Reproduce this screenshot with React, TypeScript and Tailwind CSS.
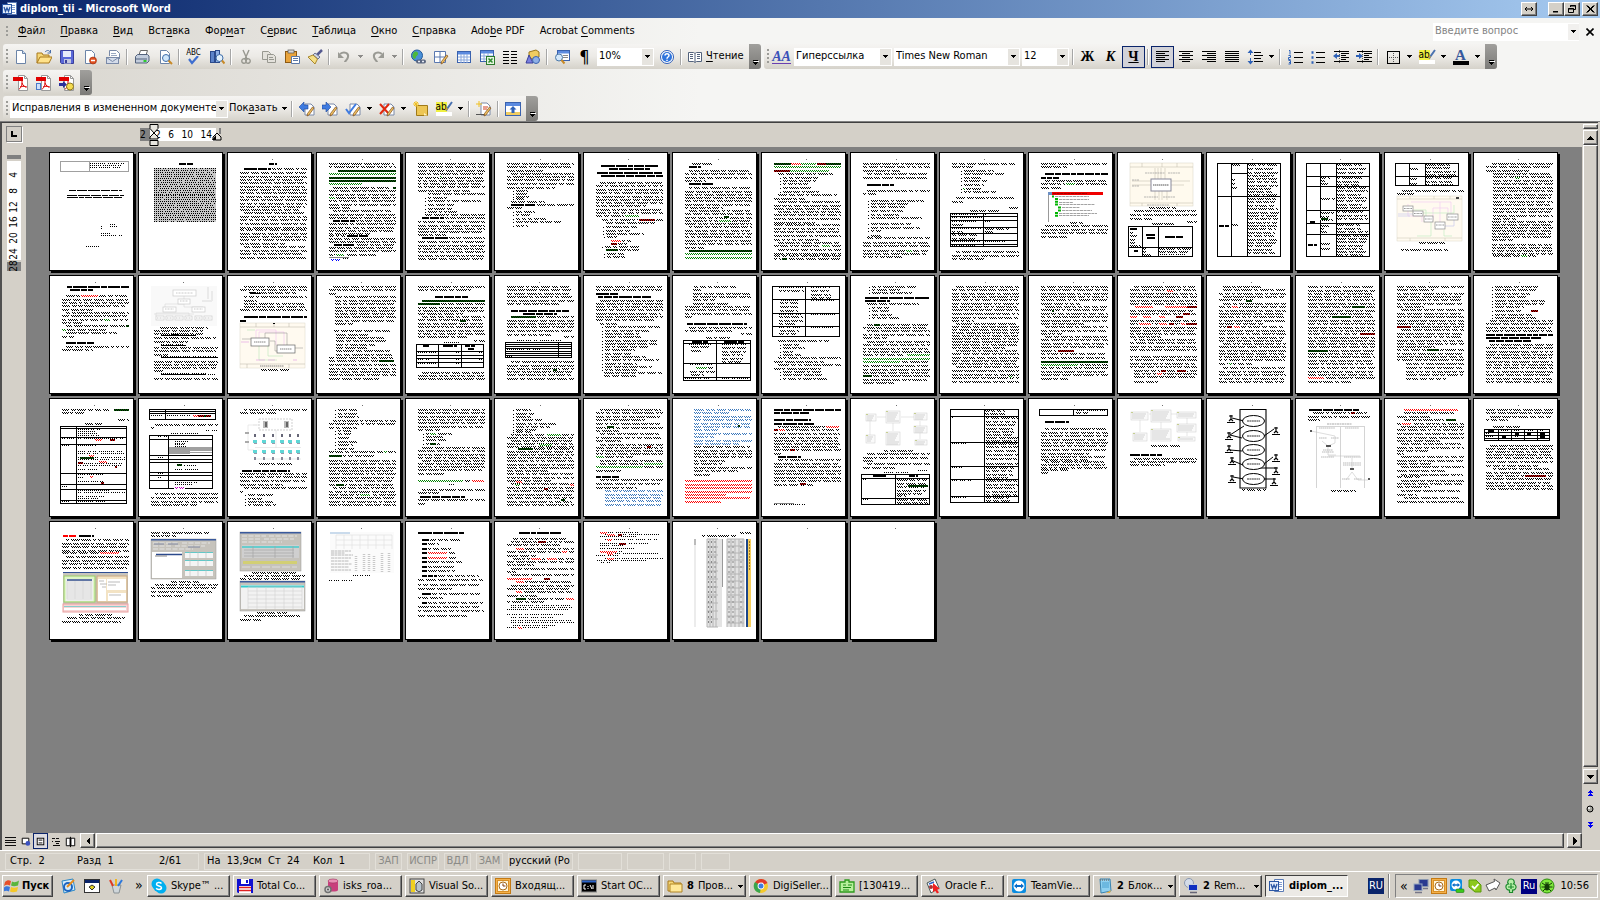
import type { ReactNode } from 'react'
import clsx from 'clsx'

/* ---------- page thumbnails ---------- */

// Each token is a run of lines: kind, first y, last y, @from:to, flags (i = indent first line, s = short last line)
// T text, L bullet list, D dotted text, H heading, I thin heading, G/R/B coloured text, g/r marked text,
// h red heading, u underlined, S selection, X table (x,y,w,h;cols;rows), F figure
const PAGES: string[] = [
  'Q11,9,68,10;40; D11-15@41:79 I38@20:73 I43@18:75 I45@18:73 D72-76@52:58 D72-74@61:68 D81@52:61 D83@52:73 D94@37:50',
  'H11@41:55 S16-69@16:78',
  'H11@42:50 H16@17:44 T16@45:80 T20-27 T30-37 T40-44 T47-54 T57@13:72 T60-64i T67-75 T77-84 T87-91s T94-105i',
  'T11-14 g18@22:80 G21@13:80 g25@13:80 g28@13:80 G31@13:46 T35@17:75 g35@77:80 T38-45 G45@13:19 T48-55s T58-62i T65s H68@17:39 T68@40:80 T71-75 T78-81s H83@31:54 T83@13:29 T86-89 H92@18:39 T92@41:80 T95-98 T102@13:60 G102@20:28 l105@13:33 b107@15:24 D106@27:33',
  'T11-14 T18-31 G24@35:37 T34-38s T41@23:80 L45@20:52 L48@20:80 L52-59@20:56 T62@20:80 H65@17:39 T65@40:80 T69-76 T79-82s H85@17:43 T85@44:80 T89-93 T96-106',
  'T11-14 T18@13:49 T21-24i T27-35s L38-41@19:42 L44-46@19:37 T49@17:51 H52@17:41 T52@43:80 T55@13:28 L59-62@19:43 L66-69@19:74 L73@19:36',
  'H13@18:75 H16@26:67 H20@14:79 H23@18:80 T30@17:80 T33-37 T40-44 T47-53s T57-63s G63@42:56 T67@19:56 r67@56:72 T67@72:80 T70@23:72 L74-81@20:62 L84@21:40 R88@28:38 T88@39:48 r91@28:34 T91@35:44 L94@19:58 g97@23:35 T97@36:56 L101-104@21:45',
  'T11@20:40 H14@17:29 T18-21i T25-28s H31@17:42 T35-42i T45-55s T58-71i g64@52:57 G68@47:59 T74-81i T84-91 T95@13:32 g98@17:80 G101-105@13:80',
  'g11@13:30 R11@30:40 G11@40:55 r11@56:65 g11@65:80 G14@13:80 r18@13:29 G18@29:68 T21@17:73 L25-28@19:65 L31-35@19:60 L39@19:66 T42-46is T49-56i T59-62i T66-70s T72-76 T79-87s T90-93i G93@61:69 T97-101i T103-106 g106@21:26',
  'T11-14 T18@13:50 T21-25i H32@17:44 T38@17:80 T41@13:26 L48-51@18:75 L54-62@18:62 L65@18:72 L71-75@18:75 L78-83@18:35 T85-90i T93-98 G98@56:62 T101-104s',
  'T11-14s L18-21@22:72 L25-28@22:56 L32-36@22:46 G36@24:26 L39@22:68 T45@17:77 T49@13:24 T55@70:79 T58@31:60 X11,61,67,33;44;64,68,75,81,88,92 D62@13:38 D65@13:43 D69@13:38 T72@13:26 D76@13:42 T79@13:24 T82@13:38 T86@13:36 D89@13:42 D93@13:36 D62@46:48 D69@46:52 T76@46:70 T79@46:54 D89@46:66 T99-106is',
  'T11-14s H21@17:80 H25@13:31 T28-31i G31@38:47 T35@13:34 Ftree T70@42:55 T73-77i T80@13:80 T84@13:40',
  'Fidef T55@32:60 T58-66is T69@70:80 T71@35:59 X11,74,64,30;25,41;95 H76@13:22 T80-93@13:24 H82@29:38 H85@30:38 H84@48:68 H98@17:21 T96-102@26:36 T96-99@42:74 D102@43:68',
  'X11,11,63,93;25,41;44 X25,11,16,10;; T12-20@42:73 T23-42@42:73 T12@26:36 T27-35@26:38 H73@13:23 T72@26:35 T46-100@42:73',
  'X11,11,63,93;25,41;24,34,58,71,82 T12-20@42:73 T25-32@42:73 T35-55@42:73 T59-66@42:73 T72-79@42:73 T83-102@42:73 T25-31@26:36 T46@26:40 T60-67@26:39 g66@26:33 T73-79@26:36 T91-96@26:37 H69@15:21 H92@13:22',
  'X11,11,63,22;25,41;24 T12-22@42:72 T25-32@42:73 T16@26:35 T26-31@26:34 T38@18:80 T41@13:30 Fflow T90@35:61 T97@17:64',
  'T11@19:80 T14@13:80 T18@13:56 T21-31@20:80 G25@42:47 T35-66@20:80s T69-81@19:80 T84-87@19:80s T92-101@19:80 T103@20:63 G103@48:54',
  'H11@18:80 H14@21:44 T20@17:78 R20@32:49 T24-30 T34@13:44 T37-40i T44-47s G44@55:61 T50@17:76 g50@77:80 G54@13:17 T54@18:60 T57@17:68 T61@13:26 H67@17:46 T71@17:80 T74@13:44',
  'Forg T52@22:70 T55-58@16:65 u60@23:58 T62-66@16:78s u70@23:48 T72-75@16:80 T79@16:30 u82@23:80 T86-92@16:80 T95@16:26 u99@23:68 D99@70:79 T103@16:80',
  'T11-14i T17@22:70 u18@23:34 T21@17:80 T25@17:30 T28-31@17:80 T34@13:80 H41@17:80 H45@13:19 Fflow2 T94@34:62',
  'T11-14i T18@13:20 T21@19:80 T25-38@19:80 T41-48@19:80s T55@18:74 T59@20:52 T62-65@20:70 T69-72@20:62s T75-79@20:76 T82-85 g85@63:78 T89-96 T99-103s',
  'T11-14s H21@30:63 g25@17:80 g28@13:35 T28@36:80 T32-38s T41-51i g45@55:61 T55-61s T65@69:80 D67@39:54 X11,69,67,23;33,56;76,80,83,87 H70@18:24 H70@38:52 H70@60:70 H73@63:69 D77@13:32 D80@13:27 D84@13:27 D88@13:31 D77@51:54 D80@51:54 D84@51:54 D88@51:54 D77@74:78 D84@74:78 T97-103i',
  'T11-14 T18-28s H35@17:75 H38@29:63 g41@17:42 T41@43:80 T45-51 T55-59s T61@70:80 D65@23:70 X11,67,66,15;64;69,71,73,76,78,80 D74@13:46 D81@13:20 T86@17:80 T90-96 g94@59:63 T99-103',
  'T11-14 H18@13:35 H21@15:68 T25-31i T34-41 T44@13:72 T48@17:36 L51@19:80 L55-58@19:80s L61@19:62 L65-71@19:80 L74-78@19:60 L81-91@19:80 L94@19:56 T97@21:80 T100@21:56',
  'T11@22:64 T14@21:30 T18-24@21:80s T28@21:58 T31@13:80 T34-38 T41@13:20 H48@15:75 T52@17:80 T55@13:60 T58@69:80 T62@34:58 X11,65,67,40;44;68,88,102 D69@17:40 T71@19:40 T75@19:29 H66@20:36 H66@52:72 D69@50:74 T72-86@50:76 D89@18:40 G92@24:35 T92@36:41 T96@18:43 T99@19:32 D103@13:37 D103@50:78',
  'X11,11,67,50;44;24,38,51 D12@18:42 D12@50:70 T15@18:43 T15-22@50:72 D25@20:38 T27-35@19:42 D25@50:74 D39@18:40 T41-48@18:42 D52@18:40 T55@19:38 T58@18:38 D39@50:74 D52@50:72 T65@17:70 L69-72@19:46 L76-79@19:42 T82-86is T89-93is L96-99@19:78 L103@19:68',
  'L11-17@19:67 H22@15:80 H25@15:40 T28@17:69 L32-35@19:44 L39-42@19:50 T49@17:80 g49@24:30 T52@13:78 T55-62is T66-76i G79@57:80 T79@13:55 G83@13:80 G86@13:50 T86@52:80 T90-97 g100@13:22 T100@23:80 T104-107s',
  'T11-14i T18-24 T28-34 T38-45s T48-60i T63-72s T75-88i T91-106i G101@70:73',
  'T11-21 T24-28s T31-41i g35@24:26 T45-48s T51-58is T61-71i r75@30:46 T75@13:28 T78-82 g86@13:80 G89@13:50 T89@52:80 T92-103s',
  'T11-14i R15@50:56 T18-28 R31@18:36 R31@48:70 r31@70:80 T35-38 r38@66:73 R41@13:20 R41@26:34 R41@42:48 r41@59:66 T45-48 R48@22:34 R48@42:50 r48@52:57 R48@64:68 r48@69:80 T52-61s T64-74i T81-84 T88-91 T95-98@17:80 r95@44:49 r95@60:69 R98@40:45 T101-106@17:80s',
  'T11@17:58 T14-18i T21-24is g25@40:46 T28-38i R31@26:32 T41-48s T51@13:80 r51@21:26 R51@28:34 T55-65 T68-81i T84-88s G88@23:26 T92-106i',
  'T11-18 T21-31 g31@57:70 T35-41 g41@37:56 T45-55 T58@13:62 r58@65:80 T62-71 g75@13:33 T75@34:80 T78-88 T92-99 R102@13:29 T102@31:80 T106@13:56',
  'T11-14s T18-24 T28-31s T34-48i r51@13:27 T51@28:80 T54-65i T68-71s T74@13:80 g74@43:55 T78-84 T88-96@22:80 T99-103@22:80s',
  'L11-14@19:80 L18-21@19:60 L25-28@19:80 L31@19:60 L35@19:60 r35@58:65 L39-42@19:80s T45-55i H59@13:80 H62@13:68 H65@16:58 T69-89i T92-106',
  'T11@13:60 g11@65:80 T14@13:37 T21@69:80 T25@36:56 X11,28,66,77;27;30,39,46,75,86,91,102 D31-37@29:55 D40@13:26 D40@29:75 R41@46:53 r41@61:66 D47@13:20 D47@29:48 D53-55@29:77 D59-61@29:77 D65-67@29:74 D71@29:48 g59@31:45 R57@40:45 r64@29:34 R63@50:58 r68@66:68 D76@29:56 D79@29:34 D83@29:56 R78@41:44 r84@52:55 D88@13:20 D92@29:60 D94@29:76 D98@29:56 D100@29:50 D103@13:20 D103@29:58',
  'X11,11,66,10;27;13,15 D17@13:25 D17@29:54 R17@55:66 g17@60:68 r17@68:73 T26@17:80 T29@13:17 D32@68:80 D35@33:61 X11,37,63,53;30;41,57,61,64,74,77,82 D38@20:30 D43-48@37:54 K49@31:74 D59@20:26 g66@39:44 D67@38:60 D71@37:60 D75@20:26 D79@20:24 D84@37:60 D86@37:56 P89@37:46 T95@17:80 T99-103 T106@13:60',
  'T11@17:80 T14@13:50 Fnet T65@32:65 H72@15:63 T75-78 T82-86s T89@17:80 T93@13:17 L96-103@18:50 L106@18:58',
  'L11-18@19:50 T22@17:80 T25-29s L32-35@19:40 L39-50@19:45 G53@68:71 T53@13:80 g57@13:26 T57@27:60 T62-82 T86@13:80 g86@20:28 T89-96i G96@44:54 T99-106',
  'T11-21 T24-31s L35-38@18:48 G35@25:31 L41-45@18:42 g45@25:31 T49-59i T62-68i T71-75s G82@13:58 T82@60:66 R82@67:79 D86@44:50 T91@17:80 T94@13:34 H98@15:60 T101@13:80 T105@13:22',
  'L11-18@19:42 L21-28@19:66 L31-33@19:44 T36-39i G36@53:67 T42-48i G46@45:58 g50@24:39 T50@40:80 T53-62 T66-72s T75-82s R83@22:28 T85-96i G86@21:26 r90@50:54 R86@76:80 T99-106 g101@67:71',
  'T11-14i T18-21s T25-32s g28@24:31 T35-42is T46-55i r48@64:68 G58@13:21 T58@22:50 T62@17:80 G65@61:80 T65@17:60 G68@13:60 T68@61:80 T72@13:38 H78@13:36 T81-85i T89@13:54 B92-99@22:80 B102-106@22:80',
  'B11-14@22:80s B18-21@22:80 B25-31@22:80s B35-38@22:80s B42-45@22:80s g27@66:68 T48-55@22:80 T58-62@22:80s T65@22:50 T69-72@22:80s T76@22:38 R82-89@13:80 R93-96@13:80s R99-103@13:80s',
  'H11@13:80 H14@13:49 H21@13:50 H25@13:53 T28@17:64 R28@65:78 r31@13:17 R31@18:24 T31@25:80 T35-42 T45-48 T51@13:80 r51@29:34 T55@13:23 H58@17:40 T61-72i T75-79 T82-86s r85@39:45 l105@13:33 D106@13:45',
  'Fuml T52@34:63 T55-59i T62@13:25 T65-69is D72@68:77 D74@34:58 X11,76,68,30;45;80,100 H77@23:36 H77@59:68 D81@13:20 T81-95@47:78 g87@58:78 T97@47:56 D101@13:18 T101-104@47:78',
  'X11,11,68,93;45;18,44,68,81,98 T12-15@46:66 D19@13:15 T19-23@47:79 T26-33@47:79 T36-42@47:79 D45@13:27 T45-48@47:79 T52-56@47:79 T60-65@47:79 D69@13:24 T69-79@47:77 D82@13:32 T82-86@47:79 T89-96@47:79 D99@13:28 T99-102@47:72',
  'X11,11,68,6;45; D12@49:78 T14@48:60 H23@17:41 T30-34i T37-44 T47-55s T58-61s T63-66i T69-71s T74@13:20',
  'Fuml2 T47@34:63 H56@13:47 T60-63i T66@13:48',
  'Fcase T91@36:60',
  'H11@14:64 T14@18:72 r14@56:60 T18@13:76 T21@13:25 Fact T92@36:61',
  'R11@20:74 T14@20:70 T18@13:46 T21@20:60 g21@62:72 T25@13:80 R25@18:27 T28-31i T35-42s T45-52is T55@13:20 T58-65is T68-72is T76-78is T82-88is T92-96is T99@20:75 T103@13:80',
  'T11-14 T18-21is T28@20:50 X11,31,65,11;25,38,51,64;34,37,40 H32@15:21 D32@28:35 D32@41:48 D32@55:60 D32@67:72 D35@13:20 H35@42:46 H35@54:58 H35@67:72 D38@13:20 H38@29:33 D38@42:46 H38@67:72 T47-56i T59-67s T70@20:76 T74-80 r77@52:73 T84-90',
  'h14@14:29 H14@30:45 T18-22i T25-29 T31@13:50 R31@51:70 T35-42i T46@13:78 Fss1 T93@30:63 T96@18:76 T100@13:72',
  'T11@13:72 T14@13:38 Fss2 T60@33:61 T63-66i T70@13:74 T74@13:47',
  'Fss3 T51@25:69 T54@17:80 T57@13:76 Fss4 T91@30:62 T94@17:73 T98@13:36',
  'Fsheet D54@37:54 D59@13:36',
  'H11@13:59 H18@17:24 T18@24:56 H22@17:22 T22@23:34 H27@17:22 T27@23:46 H31@17:22 R31@23:42 T31@44:50 H36@17:22 R36@23:42 T36@44:53 H40@17:22 T40@23:58 H45@17:22 T45@23:49 H49@17:22 T49@23:50 H54@17:32 T54@33:74 T58@13:78 T63@13:74 T67@13:47 H72@17:26 T72@27:77 T76@13:38 H81@17:22 T81@23:78 T85@13:75 T89@13:79 T94@13:62',
  'H11@25:67 T17@19:72 T20@17:80 r20@44:52 T23@13:68 R27@22:30 T27@31:80 R30@68:73 T30-34s T37@19:80 R37@37:47 R37@53:63 T40-43s T47@17:80 T50@13:22 T53@17:80 R57@13:38 r57@50:56 R60@22:30 T60@31:80 T64-67i R70@22:28 T70@30:80 T74@13:46 g77@22:32 R77@72:80 T77@34:70 T80@13:50 D84-86@17:80 D88@13:76 D93@13:70 D96@17:60 D99-101@17:80 D104@19:62 D106@13:56 R106@24:28',
  'R11@17:24 D11@25:56 D13@22:76 R13@24:32 r13@35:39 D15@17:54 D18@22:76 R18@24:29 D22@17:66 r22@36:43 D24@17:44 D27@17:54 R30@17:34 D30@36:40 D32@24:76 R32@24:30 D34@13:36 D37@22:80 R37@24:31 D39@14:64 D41@18:30',
  'T11@68:80 T14@30:66 Fbig',
  '',
  '',
]

const COLOR: Record<string, string> = {
  G: '#008000', R: '#ff0000', B: '#3a77bb', g: '#006400', r: '#e00000', h: '#ff0000', P: '#c000c0', b: '#0000ff',
}

function seeded(seed: number) {
  let s = (seed * 7919 + 104729) % 233280
  return () => {
    s = (s * 9301 + 49297) % 233280
    return s / 233280
  }
}

function wordRuns(x0: number, x1: number, rnd: () => number, min: number, spread: number) {
  const runs: [number, number][] = []
  let x = x0
  while (x < x1) {
    const w = Math.min(min + Math.floor(rnd() * spread), x1 - x)
    if (w > 1) runs.push([x, w])
    x += w + 1 + (min < 5 ? Math.floor(rnd() * 2) : 0)
  }
  return runs
}

function PageArt({ spec, seed }: { spec: string; seed: number }) {
  const rnd = seeded(seed + 1)
  const back: ReactNode[] = []
  const over: ReactNode[] = []
  let text = ''
  let thin = ''
  let clear = ''
  let solid = ''
  const checker: Record<string, string> = {}
  const bars: Record<string, string> = {}

  for (const token of spec.split(' ').filter(Boolean)) {
    const kind = token[0]
    if (kind === 'F') {
      over.push(<g key={token} shapeRendering="auto">{FIGURES[token.slice(1)]}</g>)
      continue
    }
    if (kind === 'X' || kind === 'Q') {
      const [box, cols, rows] = token.slice(1).split(';')
      const [x, y, w, h] = box.split(',').map(Number)
      let d = `M${x + 0.5} ${y + 0.5}h${w}v${h}h-${w}z`
      if (cols) cols.split(',').forEach(c => { d += `M${Number(c) + 0.5} ${y}v${h}` })
      if (rows) rows.split(',').forEach(r => { d += `M${x} ${Number(r) + 0.5}h${w}` })
      back.push(<path key={token} d={d} fill="none" stroke={kind === 'X' ? '#000' : '#a0a0a0'} />)
      continue
    }
    const m = token.match(/^(\w)(\d+)(?:-(\d+))?(?:@(\d+):(\d+))?([is]*)$/)
    if (!m) continue
    const y0 = Number(m[2])
    const y1 = Number(m[3] ?? m[2])
    const left = Number(m[4] ?? 13)
    const right = Number(m[5] ?? 80)
    const step = kind === 'S' || kind === 'D' ? 2 : 3.4
    const n = Math.max(1, Math.round((y1 - y0) / step) + 1)
    if (kind === 'S') back.push(<rect key={token} x={left} y={y0} width={right - left} height={y1 - y0 + 1} fill="#c8c8c8" />)
    if (kind === 'K') {
      back.push(<path key={token} d={`M${left} 49h${right - left}v7h-${right - left}z`} fill="#a0a0a0" />)
      back.push(<path key="k2" d="M52 53.5h22M52 55.5h22" stroke="#fff" />)
      continue
    }
    for (let i = 0; i < n; i++) {
      const y = n === 1 ? y0 : y0 + Math.round((i * (y1 - y0)) / (n - 1))
      let a = left
      let b = right
      if (i === 0 && m[6].includes('i')) a += 4
      if (n > 1 && i === n - 1 && m[6].includes('s')) b = a + Math.round((right - a) * (0.3 + rnd() * 0.5))
      else if (n > 2 && right - left < 40) b -= Math.floor(rnd() * 8)
      else if (n > 1 && rnd() > 0.65) b -= Math.floor(rnd() * 3)
      if (kind === 'L') {
        text += `M${a} ${y + 1.5}h1`
        a += 3
        b = a + Math.round((right - a) * (0.55 + rnd() * 0.45))
      }
      if (kind === 'l') {
        back.push(<path key={token} d={`M${a} ${y + 0.5}h${b - a}`} stroke="#808080" />)
        continue
      }
      const marked = 'gr'.includes(kind)
      if (!'TLDSI'.includes(kind)) clear += `M${a - 1} ${y + 1}h${b - a + 2}`
      if (marked || kind === 'G' || kind === 'R') {
        if (marked) bars[kind] = (bars[kind] ?? '') + `M${a} ${y + 1}h${b - a}`
        else checker[kind] = (checker[kind] ?? '') + `M${a} ${y + 0.5}h${b - a}M${a + 1} ${y + 1.5}h${b - a - 1}`
        if (marked) solid += `M${a} ${y + 0.5}h${b - a}M${a + 1} ${y + 1.5}h${b - a - 1}`
        continue
      }
      if (kind === 'u') over.push(<path key={token + i} d={`M${a} ${y + 0.5}h${b - a}`} stroke="#000" />)
      const heading = 'HhI'.includes(kind)
      for (const [x, w] of wordRuns(a, b, rnd, heading ? 5 : 3, heading ? 10 : 9)) {
        if (kind === 'I') thin += `M${x} ${y + 0.5}h${w}`
        else if (heading) bars[kind] = (bars[kind] ?? '') + `M${x} ${y + 1}h${w}`
        else if (kind === 'D' || kind === 'S') text += `M${x} ${y + 0.5}h${w}`
        else if (kind === 'T' || kind === 'L') text += `M${x} ${y + 0.5}h${w}M${x + 1} ${y + 1.5}h${w - 1}`
        else if (kind === 'u') solid += `M${x} ${y - 0.5}h${w}`
        else checker[kind] = (checker[kind] ?? '') + `M${x} ${y + 0.5}h${w}M${x + 1} ${y + 1.5}h${w - 1}`
      }
    }
  }

  return (
    <svg viewBox="0 0 83 117" className="block h-full w-full" shapeRendering="crispEdges">
      <g transform="translate(-1 -1)">
        {seed > 1 && <rect x={45 + (seed % 2)} y="7" width="1" height="1" fill="#707070" />}
        {back}
        <path d={text} stroke="#000" strokeDasharray="1 1" />
        <path d={clear} stroke="#fff" strokeWidth="2" />
        <path d={thin} stroke="#000" />
        {Object.entries(bars).map(([k, d]) => <path key={k} d={d} stroke={COLOR[k] ?? '#000'} strokeWidth="2" />)}
        {Object.entries(checker).map(([k, d]) => <path key={k} d={d} stroke={COLOR[k] ?? '#000'} strokeDasharray="1 1" />)}
        <path d={solid} stroke="#000" strokeDasharray="1 1" />
        {over}
      </g>
    </svg>
  )
}

const grid = (x: number, y: number, w: number, h: number, dx: number, dy: number) => {
  let d = ''
  for (let i = x; i <= x + w; i += dx) d += `M${i} ${y}v${h}`
  for (let j = y; j <= y + h; j += dy) d += `M${x} ${j}h${w}`
  return d
}

const umlBox = (x: number, y: number, w: number, h: number) => {
  let rows = ''
  for (let j = 2; j < h; j += 2) rows += `M${x + 1} ${y + j}h${w - 2 - ((j * 3) % 5)}`
  return (
    <g key={`${x}-${y}`}>
      <rect x={x} y={y} width={w} height={h} fill="#fafafa" stroke="#ccc" strokeWidth=".5" />
      <path d={rows} stroke="#bbb" strokeWidth=".6" />
      <rect x={x} y={y} width="2" height="1" fill="#c6cf90" />
    </g>
  )
}

const actor = (x: number, y: number) => (
  <path key={`${x}-${y}`} d={`M${x} ${y}v4M${x - 2} ${y + 1}h4M${x - 2} ${y + 6}l2-2l2 2M${x - 4} ${y + 7.5}h8`} stroke="#000" strokeWidth="1.2" fill="none" />
)

const FIGURES: Record<string, ReactNode> = {
  tree: (
    <>
      <path d="M20.500 41v29" stroke="#999" />
      <rect x="21" y="40" width="54" height="3" fill="#f00000" />
      <rect x="20" y="40" width="4" height="3" fill="#6b8fc4" />
      <path d="M25 41.500h34" stroke="#900" strokeWidth=".9" strokeDasharray="3 .6" />
      <path d="M27 44.500h34M31 47.500h30M31 50.500h14M31 52.500h36M34 55.500h18M34 58.500h30M31 61.500h38M31 63.500h30" stroke="#999" strokeWidth=".9" strokeDasharray="3 .6" />
      <path d="M24 44.500h2M27 47h3M27 49.800h3M27 52.600h3M30 55.500h3M30 58.500h3M27 61h3M27 63.700h3" stroke="#00b400" strokeWidth="2" />
    </>
  ),
  idef: (
    <>
      <rect x="13" y="11" width="63" height="43" fill="#fffaee" stroke="#d6d2c2" strokeWidth=".5" />
      <path d="M13 15h63M13 51h63M25 11v4M45 11v4M60 11v4M25 51v3M60 51v3M15 29h19M15 33h19M54 29h19M54 33h13M38 16v11M41 16v11M44 16v11M48 16v11M38 37v11M42 37v11M45 37v11M50 37v11" stroke="#bab6a4" strokeWidth=".5" />
      <path d="M28 21h20M51 21h12M27 45h14M46 45h12M15 28h7M15 34h7M30 53h22" stroke="#999" strokeWidth=".7" strokeDasharray="2 .5" />
      <rect x="34" y="27" width="20" height="12" fill="#fff" stroke="#889" />
      <path d="M36 33h16" stroke="#555" strokeDasharray="1.500 .5" />
    </>
  ),
  flow: (
    <>
      <rect x="13" y="44" width="65" height="45" fill="#fffaf0" stroke="#dcd8c8" strokeWidth=".5" />
      <path d="M13 47h65M13 86h65M26 44v3M50 44v3M66 44v3M26 86v3M61 86v3" stroke="#c4c0b0" strokeWidth=".5" />
      <path d="M27 50h40v14M24 52v12h14v6M56 50v22M64 65v-9h-15v12" stroke="#f2cdf2" strokeWidth=".7" fill="none" />
      <path d="M30 58h12v9M36 61h34v-8M47 70v14h-14M60 78v6h8" stroke="#c4ecc4" strokeWidth=".7" fill="none" />
      <path d="M14 62h15M14 64h12M70 66v8h-10" stroke="#c8c8ee" strokeWidth=".7" fill="none" />
      <g fill="#fff" stroke="#8a8a8a" strokeWidth=".7">
        <rect x="19" y="54" width="10" height="5" /><rect x="29" y="59" width="10" height="5" /><rect x="40" y="64" width="9" height="6" /><rect x="51" y="70" width="10" height="7" /><rect x="63" y="62" width="11" height="6" />
      </g>
      <path d="M20 56.500h8M30 61.500h8M41 67h7M52 73h8M64 65h9" stroke="#999" strokeDasharray="1 .4" />
      <rect x="72" y="45" width="3" height="2" fill="#444" />
    </>
  ),
  flow2: (
    <>
      <rect x="13" y="48" width="65" height="45" fill="#fffaf0" stroke="#dcd8c8" strokeWidth=".5" />
      <path d="M13 52h65M13 89h65M29 48v4M47 48v4M62 48v4M20 89v4M62 89v4" stroke="#b4b0a4" strokeWidth=".5" />
      <path d="M29 63v-8h20v15M32 63v-6h25v13" stroke="#f2c4f2" strokeWidth=".6" fill="none" />
      <path d="M20 55h8M32 71v14h18M41 71v10h15" stroke="#b8e8b8" strokeWidth=".6" fill="none" />
      <path d="M38 63v-5h22v12M15 64h9M43 66h5v10h2M68 73h8" stroke="#8a8a8a" strokeWidth=".5" fill="none" />
      <path d="M29 85h9M41 85h7M66 85h4M14 67h8" stroke="#e4a4e4" strokeWidth=".7" />
      <g fill="#fff" stroke="#666" strokeWidth=".7"><rect x="24" y="63" width="18" height="8" /><rect x="50" y="70" width="18" height="8" /></g>
      <path d="M27 67h12M53 74h12M33 91h24" stroke="#666" strokeWidth=".8" strokeDasharray="1.500 .5" />
      <rect x="46" y="48" width="2" height="1" />
    </>
  ),
  org: (
    <>
      <rect x="13" y="11" width="66" height="40" fill="#f9f9f9" />
      <path d="M46 21v5M46 29H27v4M46 26v6h19v3M16 39h40M18 41v-3h33v3" stroke="#d0d0d0" strokeWidth=".5" fill="none" />
      <g fill="#fff" stroke="#ccc" strokeWidth=".7">
        <rect x="35" y="15" width="23" height="6" /><rect x="40" y="24" width="12" height="5" /><rect x="25" y="32" width="13" height="5" /><rect x="54" y="32" width="13" height="5" />
        <rect x="18" y="41" width="8" height="4" /><rect x="28" y="41" width="7" height="4" /><rect x="37" y="41" width="8" height="4" /><rect x="47" y="41" width="7" height="4" /><rect x="57" y="41" width="7" height="4" /><rect x="66" y="41" width="8" height="4" />
      </g>
      <path d="M38 18h17M42 26h8M27 34h9M56 34h9M19 43h6M29 43h5M38 43h6M48 43h5M58 43h5M67 43h6" stroke="#bbb" strokeWidth=".8" strokeDasharray="1 .5" />
      <path d="M70 12v12M74 16v10M64 26h10" stroke="#eaeaea" strokeWidth="2" />
    </>
  ),
  net: (
    <>
      <rect x="32" y="21" width="33" height="11" fill="none" stroke="#bbb" strokeWidth=".7" strokeDasharray="2 1" />
      <path d="M30 27h-9v25h6M32 27h-6M28 49.500h46M49 32v18M28 61h46" stroke="#ddd" strokeWidth=".6" fill="none" />
      <rect x="36" y="23" width="5" height="7" fill="#bbb" /><rect x="57" y="23" width="5" height="7" fill="#bbb" />
      <rect x="38" y="24" width="2" height="5" fill="#666" /><rect x="59" y="24" width="2" height="5" fill="#666" />
      <path d="M18 35h4M18 44h4" stroke="#aaa" strokeWidth="2" />
      {[27, 36, 45, 54, 62, 70].map(x => (
        <g key={x}>
          <rect x={x} y="36" width="2" height="3" fill="#667" />
          <rect x={x - 1} y="42" width="4" height="3" fill="#5fd6d6" /><rect x={x} y="45" width="3" height="1" fill="#99a" />
          <rect x={x - 1} y="52" width="4" height="3" fill="#5fd6d6" /><rect x={x} y="55" width="3" height="1" fill="#99a" />
          <rect x={x} y="59" width="2" height="3" fill="#889" />
        </g>
      ))}
    </>
  ),
  uml: (
    <>
      <path d="M27 19h9M51 19h13M20 22v16M43 25v8M70 23v18" stroke="#ccc" strokeWidth=".5" />
      {[[16, 16, 10, 7], [36, 13, 14, 12], [64, 15, 13, 7], [64, 28, 13, 7], [16, 37, 9, 8], [36, 34, 14, 13], [65, 42, 12, 5]].map(b => umlBox(b[0], b[1], b[2], b[3]))}
    </>
  ),
  uml2: (
    <>
      <path d="M32 16h3M54 16h6M23 21v13M44 23v9M70 20v18" stroke="#ccc" strokeWidth=".5" />
      {[[14, 14, 17, 8], [34, 12, 20, 12], [60, 14, 19, 6], [60, 26, 19, 8], [16, 35, 14, 8], [34, 31, 20, 12], [61, 39, 17, 4]].map(b => umlBox(b[0], b[1], b[2], b[3]))}
    </>
  ),
  case: (
    <>
      <path d="M34 11v79h26V11M34 11.500h26" stroke="#000" fill="none" strokeWidth="1.100" />
      <path d="M26 20l12 3M24 37l14-9M24 37l12 3M24 52l12 1M25 62l12 5M27 79l11 2M58 38l10-7M58 66l9-7M54 70h15M58 81h8" stroke="#000" />
      {[23, 38, 52, 66, 81].map(y => (
        <g key={y}>
          <ellipse cx="47.500" cy={y} rx="11" ry="5.500" fill="#fff" stroke="#000" />
          <path d={`M41 ${y}h13`} stroke="#333" strokeDasharray="2 .4" />
        </g>
      ))}
      {[[25, 17], [23, 34], [23, 47], [26, 59], [26, 77], [70, 29], [70, 56], [70, 69], [68, 80]].map(a => actor(a[0], a[1]))}
    </>
  ),
  act: (
    <>
      <path d="M21.500 28v62M45.500 28v62M69.500 28v62M21 28.500h48" stroke="#d4d4d4" fill="none" />
      <path d="M32 26h25" stroke="#d4d4d4" strokeWidth="2" strokeDasharray="2 .5" />
      <path d="M16 33l24 5v7l-7 3l-6-5M33 48v9h8M33 58h32M57 60v12M57 74l-6 8M57 74l6 8h10" stroke="#bbb" fill="none" strokeWidth=".5" />
      <path d="M24 30h16M50 30h14M24 40h8M36 40h8M28 52h10M27 54h12M26 59h13M49 59h17M48 65h18M48 67h18M47 81h8M59 81h8" stroke="#bbb" strokeDasharray="1.500 .4" />
      <path d="M16 32v2M31 48h5M55 71h4M74 80v2" stroke="#222" strokeWidth="1.500" />
    </>
  ),
  ss1: (
    <>
      <rect x="14" y="51" width="65" height="40" fill="#c9c5bd" />
      <rect x="14" y="51" width="65" height="1" fill="#2e4d92" />
      <rect x="15" y="55" width="31" height="26" fill="#dff5c8" stroke="#9c6" />
      <rect x="17" y="58" width="27" height="22" fill="#eee" /><path d={grid(18, 60, 25, 18, 8, 2)} stroke="#ccc" strokeWidth=".5" />
      <path d="M18 59h25M58 70.500h19" stroke="#34508f" strokeWidth="1.500" />
      <rect x="48" y="55" width="30" height="26" fill="#f3e3c4" stroke="#c9a880" />
      <path d="M49 58h8v22h-8zM58 58h19v11h-19zM59 72h18v8h-18z" fill="#fff" /><path d="M50 60h5M51 63h7M53 66h4M59 61h12M59 64h8M60 74h12" stroke="#bbb" />
      <rect x="14" y="83" width="65" height="8" fill="#f7d5d5" stroke="#e9a0a0" />
      <path d="M15 85.500h62" stroke="#8cc" /><path d="M15 88h62" stroke="#fff" strokeWidth="2" />
    </>
  ),
  ss2: (
    <>
      <rect x="13" y="18" width="65" height="40" fill="#c6c3bc" stroke="#999" strokeWidth=".5" />
      <rect x="13" y="18" width="65" height="1.500" fill="#3a5a9c" />
      <path d="M15 22h26M44 22h28M15 25h18M37 25h30M15 28h40" stroke="#e4e4e4" strokeDasharray="5 1.500" /><path d="M16 23h10M30 23h10M50 26h12" stroke="#8088a0" />
      <rect x="14" y="31" width="30" height="26" fill="#fff" /><path d="M18 33.500h26" stroke="#2c4a8c" strokeWidth="1.500" /><path d="M17 35h12" stroke="#888" />
      {[31, 39, 49].map(y => <g key={y}><rect x="47" y={y} width="28" height="6" fill="#f4f4f4" /><path d={`M47 ${y + 0.5}h28`} stroke="#62c8c8" /><path d={`M52 ${y}v6M60 ${y}v6M68 ${y}v6`} stroke="#bbb" strokeWidth=".6" /></g>)}
    </>
  ),
  ss3: (
    <>
      <rect x="13" y="11" width="61" height="39" fill="#c6c3bc" stroke="#999" strokeWidth=".5" />
      <rect x="13" y="11" width="61" height="1.500" fill="#3a5a9c" />
      <path d="M15 15h24M42 15h28M15 18h18M37 18h30M15 21h40" stroke="#e4e4e4" strokeDasharray="5 1.500" />
      <rect x="15" y="24" width="57" height="13" fill="#cfcfcf" /><path d="M15 26h57" stroke="#4cc" strokeWidth="1.500" />
      <path d="M26 25v12M48 25v12M66 25v12M17 29h50M17 32h50M17 35h50" stroke="#a4a4a4" strokeWidth=".7" />
      <rect x="16" y="40" width="54" height="3" fill="#d2cf74" /><path d="M15 46h55" stroke="#ddd" strokeDasharray="8 2" />
    </>
  ),
  ss4: (
    <>
      <rect x="13" y="60" width="65" height="30" fill="#c6c3bc" stroke="#999" strokeWidth=".5" />
      <rect x="13" y="60" width="65" height="1.500" fill="#3a5a9c" />
      <rect x="14" y="64" width="63" height="24" fill="#f2f2f2" /><path d="M14 65.500h63" stroke="#3cc" strokeWidth="2" />
      <path d={grid(21, 66, 54, 22, 9, 4)} stroke="#d0d0d0" strokeWidth=".6" />
    </>
  ),
  sheet: (
    <>
      <rect x="14" y="11" width="64" height="41" fill="#fbfbfb" />
      <path d="M14 12h20" stroke="#9bd" />
      <path d={grid(20, 14, 56, 14, 8, 5)} stroke="#dedede" strokeWidth=".6" />
      <path d="M15 30h20M15 32h14M15 34h22M15 37h20M15 40h18M15 43h21M15 46h18M15 49h20" stroke="#b8b8b8" strokeDasharray="3 .5" />
      <path d="M40 35v16M48 33v18M53 33v18M58 35v16M66 32v19M73 32v19" stroke="#999" strokeWidth="2.500" strokeDasharray="1 1" opacity=".5" />
    </>
  ),
  big: (
    <>
      <rect x="22" y="18" width="2" height="88" fill="#ececec" /><rect x="22" y="18" width="2" height="6" fill="#bbb" />
      <rect x="35" y="18" width="15" height="88" fill="#e4e4e4" /><path d={grid(35, 18, 11, 88, 3, 8)} stroke="#b4b4b4" />
      <path d="M50.500 18v48" stroke="#999" />
      <path d="M36.500 20v84M39.500 20v84M43 20v60" stroke="#888" strokeDasharray="2 3" />
      <rect x="55" y="18" width="18" height="88" fill="#e2e2e2" /><path d={grid(55, 18, 17, 88, 4, 7)} stroke="#b4b4b4" />
      <path d="M57 20v84M61 20v84M69 20v84" stroke="#888" strokeDasharray="2 3" />
      <rect x="74" y="18" width="2" height="88" fill="#1c4587" /><rect x="76" y="18" width="3" height="88" fill="#f6cf60" /><path d="M77.500 20v30" stroke="#a67c20" strokeDasharray="2 1" />
    </>
  ),
}

/* ---------- icons, all on a 16px grid ---------- */

const sheetShape = <path d="M3.500 1.500h6l3 3v10h-9z" fill="#fff" stroke="#6b84a8" />
const pencil = <path d="M15 7l-5 7l-2 1l.5-2.500l5-6.500z" fill="#f0c060" stroke="#7a4a1a" strokeWidth=".7" />
const acro = (
  <>
    <path d="M5.500 .5h6l3 3v12h-9z" fill="#fff" stroke="#999" />
    <path d="M11.500 .5v3h3" fill="none" stroke="#999" />
    <rect x="0" y="2" width="10" height="4" fill="#e00000" />
    <path d="M9 6v2c0 3-2 6-3 6M9 8c1 3 3 4 5 4M7 12c2-1 4-1 6 0" fill="none" stroke="#d00" />
  </>
)

const lineRows = (rows: number[][]) => <path d={rows.map(r => `M${r[0]} ${r[2]}.5h${r[1]}`).join('')} stroke="#000" shapeRendering="crispEdges" />

const ICONS: Record<string, ReactNode> = {
  word: <><path d="M5.500 1.500h9v12h-9z" fill="#fff" stroke="#5a7ab5" /><path d="M8 4.500h5M10 6.500h3M10 8.500h3M8 11.500h5" stroke="#7f9bd0" /><rect x=".5" y="3.500" width="9" height="9" fill="#e6eefb" stroke="#2b57a5" /><path d="M2 6l1.500 4.500L5 7l1.500 3.500L8 6" fill="none" stroke="#2b57a5" strokeWidth="1.300" /></>,
  new: <>{sheetShape}<path d="M9.500 1.500v3h3" fill="#cfe0f5" stroke="#6b84a8" /></>,
  open: <><path d="M1 14V4h5l1 2h6v3" fill="#f5d778" stroke="#a8791c" /><path d="M1 14l3-6h12l-3 6z" fill="#ffe28a" stroke="#a8791c" /><path d="M9 3c2-2 4-2 5 0M14.500 1v3h-3" fill="none" stroke="#4a6fa8" /></>,
  save: <><path d="M1.500 1.500h13v13h-12l-1-1z" fill="#5a68d8" stroke="#3a3f9a" /><rect x="4" y="2" width="8" height="6" fill="#e8ecfa" /><rect x="5" y="10" width="7" height="4.500" fill="#c4c8e0" /><rect x="6" y="11" width="2" height="3" fill="#3a3f9a" /></>,
  perm: <>{sheetShape}<circle cx="11" cy="11.500" r="3.500" fill="#e05020" stroke="#9a2a0a" strokeWidth=".6" /><path d="M9 11.500h4" stroke="#fff" strokeWidth="1.500" /></>,
  mail: <><path d="M4.500 7V1.500h7l3 3V10" fill="#fff" stroke="#7a8aa8" /><path d="M6 4.500h5M6 6.500h6" stroke="#9aa8c0" /><rect x="1.500" y="8.500" width="12" height="6" fill="#d4dcea" stroke="#7a8aa8" /><path d="M1.500 8.500l6 4l6-4" fill="none" stroke="#7a8aa8" /></>,
  print: <><path d="M5 6l1.500-4.500h7L12 6z" fill="#fff" stroke="#666" /><path d="M1.500 7.500l2-2h10l1.500 1.500v5l-2 2h-11.500z" fill="#c2ccdc" stroke="#53627c" /><path d="M2 10h11" stroke="#53627c" /><rect x="9.500" y="11" width="3" height="2" fill="#2ecb2e" /></>,
  preview: <>{sheetShape}<circle cx="9" cy="9" r="3.500" fill="#cfe6fa" stroke="#3e6ca8" /><path d="M11.500 11.500l3.500 3.500" stroke="#c88a28" strokeWidth="2" /></>,
  research: <><rect x="1.500" y="2.500" width="4" height="11" fill="#5c83c9" stroke="#2c4b8c" /><rect x="6.500" y="1.500" width="4" height="12" fill="#8fb0e6" stroke="#2c4b8c" /><circle cx="10.500" cy="9" r="3.500" fill="#e2f0fb" stroke="#3e6ca8" /><path d="M13 11.500l2.500 3" stroke="#c88a28" strokeWidth="2" /></>,
  cut: <path d="M5 1l4 9M11 1L7 10M7 10a2 2 0 1 0-2 4a2 2 0 0 0 2-4M9 10a2 2 0 1 1 2 4a2 2 0 0 1-2-4" fill="none" stroke="#989890" strokeWidth="1.400" />,
  copy: <><path d="M1.500 2.500h6l2 2v6h-8z" fill="#e4e2dc" stroke="#989890" /><path d="M6.500 5.500h6l2 2v6h-8z" fill="#e4e2dc" stroke="#989890" /><path d="M8 8.500h4M8 10.500h5" stroke="#989890" /></>,
  paste: <><rect x="1.500" y="2.500" width="11" height="11" fill="#e9a43c" stroke="#8c5a14" /><rect x="4" y="1" width="6" height="3" fill="#d8d8d8" stroke="#555" strokeWidth=".7" /><path d="M7.500 7.500h8v7h-8z" fill="#fff" stroke="#5a78a8" /><path d="M9 9.500h5M9 11.500h5" stroke="#5a78a8" /></>,
  painter: <><path d="M15 1l-5 5" stroke="#555a90" strokeWidth="2.500" /><path d="M8 4l5 4l-2 2l-5-4z" fill="#cfd6e6" stroke="#6b7290" /><path d="M1 8l5-2l4.500 4L8 15z" fill="#f5df86" stroke="#a8862c" /></>,
  undo: <><path d="M4 5c4-3 9-1 8 3c-.5 3-3 4-3 5" fill="none" stroke="#9a9a94" strokeWidth="2" /><path d="M2 3v6h6z" fill="#9a9a94" /></>,
  redo: <><path d="M12 5c-4-3-9-1-8 3c.5 3 3 4 3 5" fill="none" stroke="#9a9a94" strokeWidth="2" /><path d="M14 3v6H8z" fill="#9a9a94" /></>,
  link: <><circle cx="7" cy="6.500" r="5.500" fill="#4a90d8" stroke="#235a9a" /><path d="M4 3c3-1 4 0 4 2s-3 2-2 4l-2 1c-2-2-2-5 0-7z" fill="#4db83d" /><path d="M8 12.500h6" stroke="#5a6680" strokeWidth="4" strokeLinecap="round" /><path d="M8 12.500h2M12 12.500h2" stroke="#e8ecf4" strokeWidth="1.500" /></>,
  borders: <><path d="M1.500 2.500h11v11h-11zM1.500 8h11M7 2.500v11" fill="#fff" stroke="#5a78b0" />{pencil}</>,
  table: <><rect x="1.500" y="2.500" width="13" height="11" fill="#fff" stroke="#3a62ae" /><rect x="2" y="3" width="12" height="2.500" fill="#5c8be0" /><path d="M2 8h12M2 11h12M5 5v9M8 5v9M11 5v9" stroke="#8aa8dc" /></>,
  excel: <><rect x="1.500" y="1.500" width="13" height="11" fill="#fff" stroke="#3a62ae" /><rect x="2" y="2" width="12" height="2.500" fill="#5c8be0" /><path d="M2 7h12M2 10h6M5 4v8M9 4v8" stroke="#8aa8dc" /><rect x="7.500" y="7.500" width="8" height="8" fill="#e6f5e0" stroke="#2c7a2c" /><path d="M9.500 9.500l4 4M13.500 9.500l-4 4" stroke="#2c8a2c" strokeWidth="1.500" /></>,
  columns: <path d="M1 2.500h6M9 2.500h6M1 5.500h6M9 5.500h6M1 8.500h6M9 8.500h6M1 11.500h6M9 11.500h6M1 14.500h6M9 14.500h6" stroke="#000" shapeRendering="crispEdges" />,
  drawing: <><path d="M4 3l7-2l3 2v5l-7 2l-3-2z" fill="#f0cc60" stroke="#9a761c" /><path d="M1 14l3-8l4 8z" fill="#7a80e0" stroke="#3a3f9a" /><circle cx="11" cy="11" r="3.500" fill="#8fb0e6" stroke="#3a62ae" /></>,
  docmap: <><rect x="3.500" y="1.500" width="12" height="10" fill="#fff" stroke="#3a62ae" /><rect x="4" y="2" width="11" height="2.500" fill="#5c8be0" /><path d="M9 6.500h5M9 8.500h5" stroke="#888" /><circle cx="5" cy="8.500" r="3.500" fill="#d4e8fa" stroke="#4a78a8" /><path d="M7.500 11l3 3.500" stroke="#c88a28" strokeWidth="2" /></>,
  help: <><circle cx="8" cy="8" r="6.500" fill="#fff" stroke="#2c5cb8" /><circle cx="8" cy="8" r="5" fill="#2f74dc" /><path d="M6 6.500c0-2.500 4-2.500 4 0c0 1.500-2 1.500-2 3.200M8 10.800v1.200" fill="none" stroke="#fff" strokeWidth="1.500" /></>,
  book: <><path d="M1.500 3.500h5l1.500 1l1.500-1h5v9h-5l-1.500 1l-1.500-1h-5z" fill="#fff" stroke="#53627c" /><path d="M8 5v8M3 5.500h3M3 7.500h3M3 9.500h3M10 5.500h3M10 7.500h3M10 9.500h3" stroke="#53627c" /></>,
  left: lineRows([[1, 13, 2], [1, 9, 4], [1, 13, 6], [1, 9, 8], [1, 13, 10], [1, 9, 12]]),
  center: lineRows([[1, 14, 2], [4, 8, 4], [1, 14, 6], [4, 8, 8], [1, 14, 10], [4, 8, 12]]),
  right: lineRows([[1, 14, 2], [6, 9, 4], [1, 14, 6], [6, 9, 8], [1, 14, 10], [6, 9, 12]]),
  justify: lineRows([[1, 14, 2], [1, 14, 4], [1, 14, 6], [1, 14, 8], [1, 14, 10], [1, 14, 12]]),
  spacing: <>{lineRows([[7, 7, 3], [7, 9, 6], [7, 7, 9], [7, 9, 12]])}<path d="M3.500 1v5M3.500 9v6" stroke="#2f62b8" /><path d="M.5 4l3-3.500l3 3.500zM.5 12l3 3.500l3-3.500z" fill="#2f62b8" /></>,
  numbered: <>{lineRows([[7, 9, 3], [7, 9, 8], [7, 9, 13]])}<path d="M2 1.500h1v4M1.500 6.500h2v2h-2v2h2M1.500 11.500h2v3.500h-2M2 13.500h1" fill="none" stroke="#2f62b8" /></>,
  bullets: <>{lineRows([[6, 9, 3], [6, 9, 8], [6, 9, 13]])}<path d="M1.500 3.500h2M1.500 8.500h2M1.500 13.500h2" stroke="#2f62b8" strokeWidth="2.500" /></>,
  outdent: <>{lineRows([[1, 15, 2], [8, 8, 4], [8, 5, 6], [8, 8, 8], [8, 5, 10], [1, 15, 12]])}<path d="M0 7l4-3v2h3v2H4v2z" fill="#2f62b8" /><path d="M6.500 1v14" stroke="#555" strokeDasharray="1 1" /></>,
  indent: <>{lineRows([[1, 15, 2], [8, 8, 4], [8, 5, 6], [8, 8, 8], [8, 5, 10], [1, 15, 12]])}<path d="M7 7L3 4v2H0v2h3v2z" fill="#2f62b8" /><path d="M6.500 1v14" stroke="#555" strokeDasharray="1 1" /></>,
  border: <><rect x="2.500" y="2.500" width="12" height="12" fill="none" stroke="#000" /><path d="M8.500 4v10M4 8.500h10" stroke="#555" strokeDasharray="1 1" /></>,
  acro1: acro,
  acro2: <>{acro}<rect x=".5" y="8.500" width="4" height="6" fill="#cfe0fa" stroke="#4a78c8" /></>,
  acro3: <>{acro}<path d="M0 8h4V6l4 3.500L4 13v-2H0z" fill="#2a2f9a" /><circle cx="11" cy="11.500" r="3.500" fill="#f5dc50" stroke="#8c761c" /></>,
  prev: <><path d="M6 3h6l3 3v8H6z" fill="#fff" stroke="#7a8aa8" /><path d="M0 6l5-5v3h4v4H5v3z" fill="#3f7be0" stroke="#1c479a" strokeWidth=".6" />{pencil}</>,
  next: <><path d="M6 3h6l3 3v8H6z" fill="#fff" stroke="#7a8aa8" /><path d="M9 6L4 1v3H0v4h4v3z" fill="#3f7be0" stroke="#1c479a" strokeWidth=".6" />{pencil}</>,
  accept: <><path d="M5 3h7l3 3v8H5z" fill="#fff" stroke="#7a8aa8" /><path d="M1 8l3 4l7-9" fill="none" stroke="#3f7be0" strokeWidth="2" />{pencil}</>,
  reject: <><path d="M5 3h7l3 3v8H5z" fill="#fff" stroke="#7a8aa8" /><path d="M1 3l9 10M10 3L1 13" stroke="#e02a10" strokeWidth="2" />{pencil}</>,
  comment: <><path d="M3.500 4.500h11v10h-11z" fill="#edc654" stroke="#a07a18" /><path d="M11 12v2.500h3.500z" fill="#fff3c0" /><path d="M3 0v6M0 3h6M1 1l4 4M5 1l-4 4" stroke="#f0c020" /></>,
  pane: <><path d="M5 2h6l3 3v9H5z" fill="#fff" stroke="#7a8aa8" /><path d="M0 13.500h9" stroke="#555" /><path d="M3 0v6M0 3h6" stroke="#f0c020" /><path d="M7 6h5M7 8h4" stroke="#d04020" />{pencil}</>,
  review: <><rect x=".5" y="1.500" width="15" height="13" fill="#fff" stroke="#3a62ae" /><rect x="1" y="2" width="14" height="3" fill="#5c8be0" /><rect x="1" y="11" width="14" height="3" fill="#f0cc60" /><path d="M8 5l3.500 3.500h-2V12h-3V8.500h-2z" fill="#2f62b8" /></>,
  flag: <><path d="M1 4c2-2 4-2 6-1L6 7.500C4 6.500 2 6.500 0 8z" fill="#e8502a" /><path d="M8 3.500c2 1 4 1 7-1l-1 5c-3 1-5 1-7 0z" fill="#5ab53c" /><path d="M0 9.500c2-2 4-1.500 6-.5l-1 4.500c-2-1-4-1-6 .5z" fill="#3c78dc" /><path d="M7 9c2 1 4 1 7 0l-1 4.500c-3 1-5 1-7 0z" fill="#f5c828" /></>,
  outlook2: <><path d="M2 3l11-2l2 11l-11 3z" fill="#d4ecfb" stroke="#2a88c8" /><circle cx="8" cy="9" r="4" fill="none" stroke="#1c64c0" strokeWidth="2" /><path d="M7 9l7-7" stroke="#e88c1c" strokeWidth="2" /></>,
  desktop: <><rect x=".5" y="1.500" width="15" height="13" fill="#fff" stroke="#333" /><rect x="1" y="2" width="14" height="3" fill="#0a246a" /><path d="M5 9l3-2l3 2l-3 3z" fill="#e0d020" stroke="#333" /></>,
  pens: <><path d="M4 7h9l-2 8H6z" fill="#cfd6da" stroke="#8a9296" /><path d="M5 8L2 2" stroke="#e03a20" strokeWidth="2" /><path d="M8 8V1" stroke="#f0b420" strokeWidth="2" /><path d="M10 8l4-6" stroke="#2c78dc" strokeWidth="2" /></>,
  skype: <><circle cx="6" cy="6" r="5.500" fill="#00aff0" /><circle cx="10" cy="10" r="5.500" fill="#00aff0" /><circle cx="8" cy="8" r="6" fill="#00aff0" /><path d="M10.500 5.500C9 4 5.500 4.300 5.500 6.200c0 2.200 5 1.300 5 3.600c0 2-4 2.200-5.300.5" fill="none" stroke="#fff" strokeWidth="1.500" /></>,
  total: <><path d="M0 1h16v14H1l-1-1z" fill="#1010d0" /><rect x="4" y="1" width="8" height="5" fill="#fff" /><rect x="9" y="2" width="2" height="3" fill="#1010d0" /><rect x="2" y="8" width="12" height="7" fill="#fff" /><path d="M2 9.500h12M2 12.500h12" stroke="#e02020" strokeWidth="1.500" /></>,
  isks: <><path d="M5 3v9c0 2 10 2 10 0V3z" fill="#c8407c" /><ellipse cx="10" cy="3" rx="5" ry="2" fill="#e890b4" stroke="#a02c5c" strokeWidth=".6" /><circle cx="5" cy="11.500" r="3" fill="#ccc" stroke="#707070" strokeWidth="1.500" /><circle cx="5" cy="11.500" r="1" fill="#555" /></>,
  visual: <><rect x="1" y="1" width="14" height="14" fill="#ddd" stroke="#444" /><path d="M2 2h4v12H2z" fill="#f0d020" /><path d="M7 12V6l3-3l3 3v6l-3 2z" fill="#b8c4cc" stroke="#444" /></>,
  clock: <><rect x=".5" y=".5" width="15" height="15" fill="#f5b14a" stroke="#c47a14" /><rect x="2.500" y="2.500" width="11" height="11" fill="#fff4d8" stroke="#d89028" /><circle cx="8" cy="8" r="4" fill="#fff" stroke="#a86c1c" /><path d="M8 5.500V8h2.500" fill="none" stroke="#803c10" /></>,
  cmd: <><rect x=".5" y="2" width="15" height="12" fill="#000" stroke="#888" /><rect x="1" y="2.500" width="14" height="2" fill="#2c64c8" /><path d="M5 7H3v4h2M7 8v1M7 10v1M9 7l2 4M12 7v4" stroke="#fff" fill="none" /></>,
  folder: <><path d="M1 13V3h5l1 2h7v8z" fill="#f5d778" stroke="#a8791c" /><path d="M3 14V6h12v8z" fill="#ffe898" stroke="#b08424" /></>,
  chrome: <><circle cx="8" cy="8" r="7" fill="#f5c92c" /><path d="M8 8L2 4.500A7 7 0 0 1 14.500 5z" fill="#e03a2c" /><path d="M8 8l-6-4A7 7 0 0 0 7 15z" fill="#3aa64c" /><circle cx="8" cy="8" r="3.400" fill="#fff" /><circle cx="8" cy="8" r="2.500" fill="#3f7be0" /></>,
  note: <><path d="M1 4h5V2h4v2h5v10H1z" fill="#b8f09c" stroke="#2c9a1c" strokeWidth="1.300" /><path d="M4 7h3M9 7h4M4 9.500h8M4 12h6" stroke="#1c8a14" /></>,
  oracle: <><path d="M2 5l8-4l4 9l-8 5z" fill="#fff" stroke="#455" /><path d="M4 6l5-2" stroke="#2c64c8" strokeWidth="1.500" /><circle cx="6" cy="9" r="2" fill="#b03030" /><path d="M8 5l7 6l-3 .5l2 3l-2 1l-2-3l-2 2z" fill="#f02020" /></>,
  teamv: <><rect x="1" y="1" width="14" height="14" rx="2" fill="#0a8ce0" /><circle cx="8" cy="8" r="5.500" fill="#fff" /><path d="M3 8l3-2.500v1.500h4V5.500L13 8l-3 2.500V9H6v1.500z" fill="#0a6cc8" /></>,
  notepad: <><path d="M3 1h10l1 12l-10 2z" fill="#8fd0f0" stroke="#3a84b0" /><path d="M3 2h10" stroke="#777" strokeWidth="1.500" strokeDasharray="1 1" /><path d="M5 5h7M5 7h7M5 9h7" stroke="#4aa0d0" /><path d="M14 12l-5 3h4z" fill="#e0b050" /></>,
  remote: <><circle cx="6" cy="5" r="4.500" fill="#d4dce8" stroke="#8a98b0" /><rect x="5.500" y="6.500" width="9" height="6" fill="#1030c0" stroke="#c8d0d8" /><path d="M7 14.500h7" stroke="#667" strokeWidth="1.500" /></>,
  netpc: <><rect x="6" y="1.500" width="9" height="7" fill="#2a3a90" stroke="#8a98b0" /><rect x="1" y="6" width="8" height="6.500" fill="#2a3a90" stroke="#9aa8c0" /><path d="M2 14.500h7M10 10.500h5" stroke="#778" strokeWidth="1.500" /></>,
  teamtray: <><rect x="1" y="1" width="12" height="12" rx="2" fill="#0a8ce0" /><circle cx="7" cy="7" r="4.500" fill="#fff" /><path d="M3 7l2.500-2v1.300h3V5L11 7l-2.500 2V7.700h-3V9z" fill="#0a6cc8" /><rect x="7" y="11" width="8" height="3.500" rx="1" fill="#3cc81c" stroke="#1c7a10" strokeWidth=".6" /></>,
  skypetray: <><path d="M2 2h7l5 5v7H8L2 9z" fill="#8cc81c" stroke="#5a9a0c" /><path d="M5 8l2.500 2.500L11.500 6" fill="none" stroke="#fff" strokeWidth="1.800" /></>,
  share: <path d="M1 7l3 6l6-3l1 2l4-7l-6-4l.5 2.500z" fill="#fff" stroke="#555" />,
  clover: <path d="M8 1a3 3 0 0 1 2.500 5a3 3 0 1 1-1 6v2.500h-3V12a3 3 0 1 1-1-6A3 3 0 0 1 8 1zM8 5v6M5 9h6" fill="#b8f0a8" stroke="#1c8a2c" strokeWidth="1.200" />,
  spider: <><circle cx="8" cy="8" r="7" fill="#7ee83c" stroke="#2c8a0c" /><ellipse cx="8" cy="9" rx="2.500" ry="3.500" fill="#143c08" /><path d="M6 7L3 5M6 9H2.500M6 11l-2 2M10 7l3-2M10 9h3.500M10 11l2 2M6 5l4 0" stroke="#143c08" /></>,
  vnormal: <path d="M2 3.500h12M2 6.500h12M2 9.500h12M2 12.500h12" stroke="#000" shapeRendering="crispEdges" />,
  vweb: <><path d="M4.500 4.500h7v6h-7z" fill="#fff" stroke="#000" /><circle cx="10.500" cy="10" r="2.500" fill="#3a50c0" /></>,
  vprint: <><rect x="4.500" y="4.500" width="7" height="7" fill="#fff" stroke="#000" /><path d="M6 6.500h4M6 9.500h4" stroke="#000" /></>,
  voutline: <path d="M4 4.500h3M8 4.500h4M7 7.500h6M4 7.500h1M8 10.500h4M5 12.500h8" stroke="#000" shapeRendering="crispEdges" />,
  vread: <><path d="M3.500 4.500h4v8h-4zM8.500 4.500h4v8h-4z" fill="#fff" stroke="#000" /><path d="M8 3v11" stroke="#000" /></>,
}

function Icon({ name, size = 'size-4' }: { name: string; size?: string }) {
  return <svg viewBox="0 0 16 16" className={clsx('shrink-0', size)}>{ICONS[name]}</svg>
}

const Caret = () => <svg viewBox="0 0 5 3" className="h-[3px] w-[5px] shrink-0" shapeRendering="crispEdges"><path d="M0 0h5L2.500 3z" /></svg>

/* ---------- toolbars ---------- */

const BEVEL = 'border border-l-white border-t-white border-b-[#404040] border-r-[#404040] bg-[#d4d0c8] shadow-[inset_-1px_-1px_0_#808080]'

function Tool({ name, active, children }: { name: string; active?: boolean; children?: ReactNode }) {
  return (
    <button aria-label={name} className={clsx('flex h-[22px] w-[23px] shrink-0 items-center justify-center', active && 'border border-[#0a246a] bg-[#d2d2d8]')}>
      {children ?? <Icon name={name} />}
    </button>
  )
}

const Drop = ({ dim }: { dim?: boolean }) => (
  <button aria-label="▾" className={clsx('flex h-[22px] w-[11px] shrink-0 items-center justify-center', dim && 'opacity-40')}><Caret /></button>
)

const Sep = () => <span className="mx-[2px] h-4 w-[2px] shrink-0 border-l border-r border-l-[#a6a6a6] border-r-white" />

function Bar({ children }: { children: ReactNode }) {
  return (
    <div className="flex h-[25px] items-center overflow-hidden rounded-[3px] bg-linear-to-b from-[#f5f4f2] via-[#eceae6] to-[#d5d2ca]">
      <span className="ml-[3px] mr-[1px] h-4 w-[2px] shrink-0 bg-[repeating-linear-gradient(to_bottom,#9c9c98_0_2px,transparent_2px_4px)]" />
      {children}
      <button aria-label="»" className="ml-[2px] flex h-[25px] w-3 shrink-0 flex-col items-center justify-end gap-[1px] bg-linear-to-b from-[#a09f9c] to-[#7c7b78] pb-1">
        <span className="h-px w-[5px] bg-black shadow-[1px_1px_0_#fff]" />
        <Caret />
      </button>
    </div>
  )
}

function Combo({ label, value, width }: { label: string; value: string; width: string }) {
  return (
    <label className={clsx('mx-px flex h-[18px] shrink-0 items-center bg-white', width)}>
      <select aria-label={label} className="h-full min-w-0 flex-1 appearance-none bg-transparent pl-[2px] outline-none">
        <option>{value}</option>
      </select>
      <span className="pointer-events-none mr-px flex h-4 w-[11px] items-center justify-center bg-[#e6e4df]"><Caret /></span>
    </label>
  )
}

const Marker = () => (
  <span className="flex w-4 flex-col">
    <span className="relative flex h-[11px] items-center text-[10px] leading-[10px]">
      <span className="bg-[#f0f040]">ab</span>
      <svg viewBox="0 0 8 10" className="absolute -right-px top-0 h-[10px] w-2"><path d="M7 1L2 8l-1 1.500" stroke="#4a72b0" strokeWidth="2" /><path d="M2 7l-1 2" stroke="#caa030" strokeWidth="2" /></svg>
    </span>
    <span className="h-1 bg-white" />
  </span>
)

const MENU = [['', 'Ф', 'айл'], ['', 'П', 'равка'], ['', 'В', 'ид'], ['Вст', 'а', 'вка'], ['Фор', 'м', 'ат'], ['С', 'е', 'рвис'], ['', 'Т', 'аблица'], ['', 'О', 'кно'], ['', 'С', 'правка'], ['Ado', 'b', 'e PDF'], ['Acrobat ', 'C', 'omments']]

const TASKS = [
  ['skype', 'Skype™ ...'], ['total', 'Total Co...'], ['isks', 'isks_roa...'], ['visual', 'Visual So...'], ['clock', 'Входящ...'], ['cmd', 'Start OC...'],
  ['folder', 'Пров...', '8'], ['chrome', 'DigiSeller...'], ['note', '[130419...'], ['oracle', 'Oracle F...'], ['teamv', 'TeamVie...'], ['notepad', 'Блок...', '2'], ['remote', 'Rem...', '2'],
]

function TitleButton({ label, d }: { label: string; d: string }) {
  return (
    <button aria-label={label} className={clsx('flex h-[14px] w-4 items-center justify-center', BEVEL)}>
      <svg viewBox="0 0 10 10" className="size-[10px]" fill="none" stroke="#000"><path d={d} /></svg>
    </button>
  )
}

function TitleBar() {
  return (
    <header className="flex h-[18px] shrink-0 items-center bg-linear-to-r from-[#0a246a] to-[#a6caf0] px-[2px]">
      <Icon name="word" />
      <h1 className="ml-[2px] flex-1 text-[11px] font-bold text-white">diplom_tii - Microsoft Word</h1>
      <TitleButton label="↔" d="M1 5h8M3 3L1 5l2 2M7 3l2 2l-2 2" />
      <span className="w-[11px]" />
      <TitleButton label="_" d="M2 8h5M2 7.500h5" />
      <TitleButton label="❐" d="M3.500 3V1.500h5v4h-2M3 2h6M1.500 4.500h5v4h-5zM1 5h6" />
      <span className="w-[2px]" />
      <TitleButton label="×" d="M1.500 1.500l7 7M8.500 1.500l-7 7M2.500 1.500l7 7M9.500 1.500l-7 7" />
    </header>
  )
}

function MenuBar() {
  return (
    <nav className="flex h-[26px] items-center pt-px pr-1 pl-[6px] text-[11px]">
      <span className="h-3 w-[2px] bg-[repeating-linear-gradient(to_bottom,#9c9c98_0_2px,transparent_2px_4px)]" />
      <div className="ml-[2px] flex flex-1">
        {MENU.map(([a, b, c]) => (
          <button key={b + c} className="pr-[7px] pl-2 whitespace-nowrap">{a}<u className="underline-offset-2">{b}</u>{c}</button>
        ))}
      </div>
      <label className="flex h-[18px] w-[146px] items-center bg-white pl-[2px]">
        <input aria-label="Введите вопрос" placeholder="Введите вопрос" className="min-w-0 flex-1 outline-none placeholder:text-[#848484]" />
        <span className="flex h-4 w-[11px] items-center justify-center bg-[#f1f0ee]"><Caret /></span>
      </label>
      <button aria-label="×" className="ml-[5px] flex w-3 justify-center">
        <svg viewBox="0 0 8 8" className="size-2"><path d="M.5 .5l7 7M7.500 .5l-7 7" stroke="#000" strokeWidth="1.600" /></svg>
      </button>
    </nav>
  )
}

function Toolbars() {
  return (
    <div className="flex flex-col items-start gap-px pl-[3px] text-[11px]">
      <div className="flex gap-[3px]">
        <Bar>
          {['new', 'open', 'save', 'perm', 'mail'].map(n => <Tool key={n} name={n} />)}
          <Sep />
          <Tool name="print" /><Tool name="preview" />
          <Sep />
          <Tool name="ABC">
            <span className="flex flex-col items-center text-[8px] leading-[7px]">
              ABC
              <svg viewBox="0 0 12 9" className="h-[9px] w-3"><path d="M1 3l3 4l6-7" fill="none" stroke="#3f6fd0" strokeWidth="2.200" /></svg>
            </span>
          </Tool>
          <Tool name="research" />
          <Sep />
          <Tool name="cut" /><Tool name="copy" /><Tool name="paste" /><Tool name="painter" />
          <Sep />
          <Tool name="undo" /><Drop dim /><Tool name="redo" /><Drop dim />
          <Sep />
          {['link', 'borders', 'table', 'excel', 'columns', 'drawing'].map(n => <Tool key={n} name={n} />)}
          <Sep />
          <Tool name="docmap" />
          <Tool name="¶"><span className="text-[18px] leading-none">¶</span></Tool>
          <Combo label="10%" value="10%" width="w-[57px]" />
          <Tool name="help" />
          <Sep />
          <button className="flex h-[22px] w-[63px] shrink-0 items-center gap-[3px] pl-[3px]">
            <Icon name="book" /><span><u className="underline-offset-2">Ч</u>тение</span>
          </button>
        </Bar>
        <Bar>
          <Tool name="AA">
            <span className="border-b border-[#6a3fb0] font-['Liberation_Serif',serif] text-[14px] leading-[13px] font-bold text-[#3a50b8] italic">AA</span>
          </Tool>
          <Combo label="Гиперссылка" value="Гиперссылка" width="w-[98px]" />
          <Combo label="Times New Roman" value="Times New Roman" width="w-[126px]" />
          <Combo label="12" value="12" width="w-[47px]" />
          <Sep />
          <Tool name="Ж"><b className="font-['Liberation_Serif',serif] text-[14px]">Ж</b></Tool>
          <Tool name="К"><b className="font-['Liberation_Serif',serif] text-[14px] italic">К</b></Tool>
          <Tool name="Ч" active><b className="font-['Liberation_Serif',serif] text-[14px] leading-none underline">Ч</b></Tool>
          <Sep />
          <Tool name="left" active />
          <Tool name="center" /><Tool name="right" /><Tool name="justify" />
          <Tool name="spacing" /><Drop />
          <Sep />
          {['numbered', 'bullets', 'outdent', 'indent'].map(n => <Tool key={n} name={n} />)}
          <Sep />
          <Tool name="border" /><Drop />
          <Tool name="ab"><Marker /></Tool><Drop />
          <Tool name="A"><span className="w-4 border-b-4 border-black text-center font-['Liberation_Serif',serif] text-[15px] leading-[12px] font-bold text-[#35589c]">A</span></Tool><Drop />
        </Bar>
      </div>
      <Bar>
        <Tool name="acro1" /><Tool name="acro2" /><Tool name="acro3" />
      </Bar>
      <Bar>
        <Combo label="Показать" value="Исправления в измененном документе" width="w-[218px]" />
        <button className="flex h-[22px] w-[60px] shrink-0 items-center gap-1 whitespace-nowrap"><span>Пок<u className="underline-offset-2">а</u>зать</span><Caret /></button>
        <Sep />
        <Tool name="prev" /><Tool name="next" />
        <Tool name="accept" /><Drop />
        <Tool name="reject" /><Drop />
        <Tool name="comment" />
        <Tool name="ab"><Marker /></Tool><Drop />
        <Sep />
        <Tool name="pane" />
        <Sep />
        <Tool name="review" />
      </Bar>
    </div>
  )
}

/* ---------- document area ---------- */

function HorizontalRuler() {
  return (
    <div className="flex h-6 shrink-0 items-center pb-[2px] pl-1">
      <span className="flex size-4 items-center justify-center border border-[#808080] shadow-[1px_1px_0_#fff]">
        <svg viewBox="0 0 8 8" className="size-2"><path d="M2 1v5h5" fill="none" stroke="#000" strokeWidth="2" /></svg>
      </span>
      <div className="ml-[118px] flex h-[13px] text-[10px] leading-[13px]">
        <span className="w-[10px] bg-[#808080]">2</span>
        <span className="relative flex w-[62px] justify-between bg-white pl-[5px]">
          <span>2</span><span>6</span><span>10</span><span>14</span>
          <svg viewBox="0 0 10 22" className="absolute -top-1 -left-px h-[22px] w-[10px]" fill="#e8e6e0" stroke="#000">
            <path d="M1 .5h8v4L5 9L1 4.500zM5 9l4 4v2H1v-2zM1 16.500h8v5H1z" />
          </svg>
        </span>
        <svg viewBox="0 0 10 13" className="h-[13px] w-[10px]"><path d="M0 0h4v13H0z" fill="#fff" /><path d="M7 0h2v6H7z" fill="#808080" /><path d="M5 5l4 4v3H1V9z" fill="#e8e6e0" stroke="#000" /><path d="M0 12l4-5v5z" /></svg>
      </div>
    </div>
  )
}

function VerticalRuler() {
  return (
    <div className="flex w-6 shrink-0 flex-col pt-2 pl-[5px] text-[10px]">
      <span className="mb-[2px] h-1 w-[14px] bg-[#808080]" />
      <div className="flex h-[99px] w-[14px] flex-col justify-between bg-white pt-[8px]">
        {['4', '8', '12', '16', '20', '24'].map(n => (
          <span key={n} className="flex h-[12px] items-center justify-center"><span className="-rotate-90 leading-none">{n}</span></span>
        ))}
      </div>
      <span className="mt-[2px] flex h-[9px] w-[14px] items-end justify-center bg-[#808080]"><span className="-rotate-90 leading-none">28</span></span>
    </div>
  )
}

function ScrollArrow({ d, label }: { d: string; label: string }) {
  return (
    <button aria-label={label} className={clsx('flex size-[15px] shrink-0 items-center justify-center', BEVEL)}>
      <svg viewBox="0 0 8 8" className="size-2" shapeRendering="crispEdges"><path d={d} /></svg>
    </button>
  )
}

function VerticalScroll() {
  return (
    <div className="flex w-4 shrink-0 flex-col items-center bg-[#d4d0c8] pt-px">
      <span className={clsx('mb-px h-[5px] w-[15px] shrink-0', BEVEL)} />
      <ScrollArrow label="▲" d="M0 6h8L4 2z" />
      <span className={clsx('w-[15px] flex-1', BEVEL)} />
      <span className="h-[2px] shrink-0" />
      <ScrollArrow label="▼" d="M0 2h8L4 6z" />
      <div className="flex h-[66px] shrink-0 flex-col items-center justify-start gap-[9px] pt-[6px]">
        <svg viewBox="0 0 6 6" className="size-[6px]" shapeRendering="crispEdges"><path d="M0 3l3-3l3 3zM0 6l3-3l3 3z" fill="#0000f0" /></svg>
        <svg viewBox="0 0 8 8" className="size-2"><circle cx="4" cy="4" r="3" fill="#a8a8a0" stroke="#000" /><circle cx="3" cy="3" r="1" fill="#fff" /></svg>
        <svg viewBox="0 0 6 6" className="size-[6px]" shapeRendering="crispEdges"><path d="M0 0h6L3 3zM0 3h6L3 6z" fill="#0000f0" /></svg>
      </div>
    </div>
  )
}

function BottomScroll() {
  return (
    <div className="flex h-[17px] shrink-0 items-start pl-px">
      <div className="flex w-[77px] shrink-0 items-center">
        {['vnormal', 'vweb', 'vprint', 'voutline', 'vread'].map(v => (
          <button key={v} aria-label={v} className={clsx('flex h-4 w-[15px] items-center justify-center', v === 'vprint' && 'border border-[#0a246a] bg-[#dcdce2]')}>
            <Icon name={v} size="size-[15px]" />
          </button>
        ))}
      </div>
      <ScrollArrow label="◄" d="M2 4l4-4v8z" />
      <span className={clsx('ml-px h-[15px] flex-1', BEVEL)} />
      <span className="w-[3px]" />
      <ScrollArrow label="►" d="M6 4L2 0v8z" />
    </div>
  )
}

function Pane({ children, className }: { children?: ReactNode; className: string }) {
  return <span className={clsx('flex h-[17px] shrink-0 items-center overflow-hidden border border-[#e2dfd8] whitespace-nowrap', className)}>{children}</span>
}

function StatusBar() {
  return (
    <footer className="flex h-[21px] shrink-0 items-center border-t border-white pt-px pl-[5px] text-[11px]">
      <Pane className="w-[194px] pl-1">
        <span className="w-[67px]">Стр.&nbsp; 2</span><span className="w-[82px]">Разд&nbsp; 1</span><span>2/61</span>
      </Pane>
      <Pane className="ml-[5px] w-[166px] pl-[2px]">
        <span className="w-[61px]">На&nbsp; 13,9см</span><span className="w-[45px]">Ст&nbsp; 24</span><span>Кол&nbsp; 1</span>
      </Pane>
      <Pane className="ml-[5px] w-[27px] justify-center text-[#8a8a86]">ЗАП</Pane>
      <Pane className="ml-[5px] w-[32px] justify-center text-[#8a8a86]">ИСПР</Pane>
      <Pane className="ml-[5px] w-[27px] justify-center text-[#8a8a86]">ВДЛ</Pane>
      <Pane className="ml-[5px] w-[27px] justify-center text-[#8a8a86]">ЗАМ</Pane>
      <Pane className="ml-[5px] w-[65px]">русский (Ро</Pane>
      <Pane className="ml-[5px] w-[44px]" />
      <Pane className="ml-[5px] w-[37px]" />
      <Pane className="ml-[5px] w-[27px]" />
      <Pane className="ml-[5px] w-[29px]" />
    </footer>
  )
}

function Taskbar() {
  return (
    <div className="flex h-[29px] shrink-0 items-center border-t border-white px-[2px] text-[11px]">
      <button className={clsx('flex h-[22px] w-[51px] shrink-0 items-center gap-[2px] pl-px font-bold', BEVEL)}>
        <Icon name="flag" />Пуск
      </button>
      <div className="flex w-[94px] shrink-0 items-center gap-2 pl-[7px]">
        <Icon name="outlook2" /><Icon name="desktop" /><Icon name="pens" />
        <span className="ml-[3px] self-start text-[14px] leading-none">»</span>
      </div>
      <div className="flex min-w-0 flex-1 gap-[3px]">
        {TASKS.map(([icon, text, count]) => (
          <button key={text} className={clsx('flex h-[22px] w-[83px] items-center gap-1 overflow-hidden pr-[2px] pl-[3px] whitespace-nowrap', BEVEL)}>
            <Icon name={icon} />
            {count && <b>{count}</b>}
            <span className="flex-1 text-left">{text}</span>
            {count && <Caret />}
          </button>
        ))}
        <button className="flex h-[22px] w-[83px] items-center gap-1 overflow-hidden border border-t-[#404040] border-r-white border-b-white border-l-[#404040] bg-[#eceae6] pl-[3px] font-bold whitespace-nowrap">
          <Icon name="word" />diplom_...
        </button>
      </div>
      <span className="flex h-4 w-4 shrink-0 items-center justify-center bg-[#0a246a] text-white">RU</span>
      <span className="ml-1 h-6 w-[2px] border-r border-l border-r-white border-l-[#808080]" />
      <div className="ml-[5px] flex h-6 w-[203px] shrink-0 items-center gap-[2px] border border-t-[#808080] border-r-white border-b-white border-l-[#808080] pr-2 pl-1">
        <span className="w-[11px] text-[14px] leading-none">«</span>
        <Icon name="netpc" /><Icon name="clock" /><Icon name="teamtray" /><Icon name="skypetray" /><Icon name="share" /><Icon name="clover" />
        <span className="flex h-[15px] w-4 shrink-0 items-center justify-center bg-[#000080] text-white">Ru</span>
        <Icon name="spider" />
        <time className="flex-1 text-right">10:56</time>
      </div>
    </div>
  )
}

export default function App() {
  return (
    <div className="flex h-screen flex-col overflow-hidden bg-[#d4d0c8] font-['DejaVu_Sans_Condensed','DejaVu_Sans',sans-serif] text-black">
      <TitleBar />
      <div className="shrink-0 bg-[linear-gradient(to_right,#d8d5ce,#f5f5f3_700px)]">
        <MenuBar />
        <Toolbars />
      </div>
      <main className="flex min-h-0 flex-1 flex-col border-t border-t-[#808080] pr-[2px]">
        <div className="flex min-h-0 flex-1 border-t border-l-2 border-t-[#404040] border-l-[#505050]">
          <div className="flex min-w-0 flex-1 flex-col">
            <HorizontalRuler />
            <div className="flex min-h-0 flex-1">
              <VerticalRuler />
              <div className="flex min-w-0 flex-1 flex-wrap content-start gap-1 overflow-hidden bg-[#808080] pt-[5px] pl-[23px]">
                {PAGES.map((spec, i) => (
                  <div key={i} className="h-[119px] w-[85px] border border-black bg-white shadow-[2px_2px_0_#000]">
                    <PageArt spec={spec} seed={i} />
                  </div>
                ))}
              </div>
            </div>
            <BottomScroll />
          </div>
          <VerticalScroll />
        </div>
      </main>
      <StatusBar />
      <Taskbar />
    </div>
  )
}
